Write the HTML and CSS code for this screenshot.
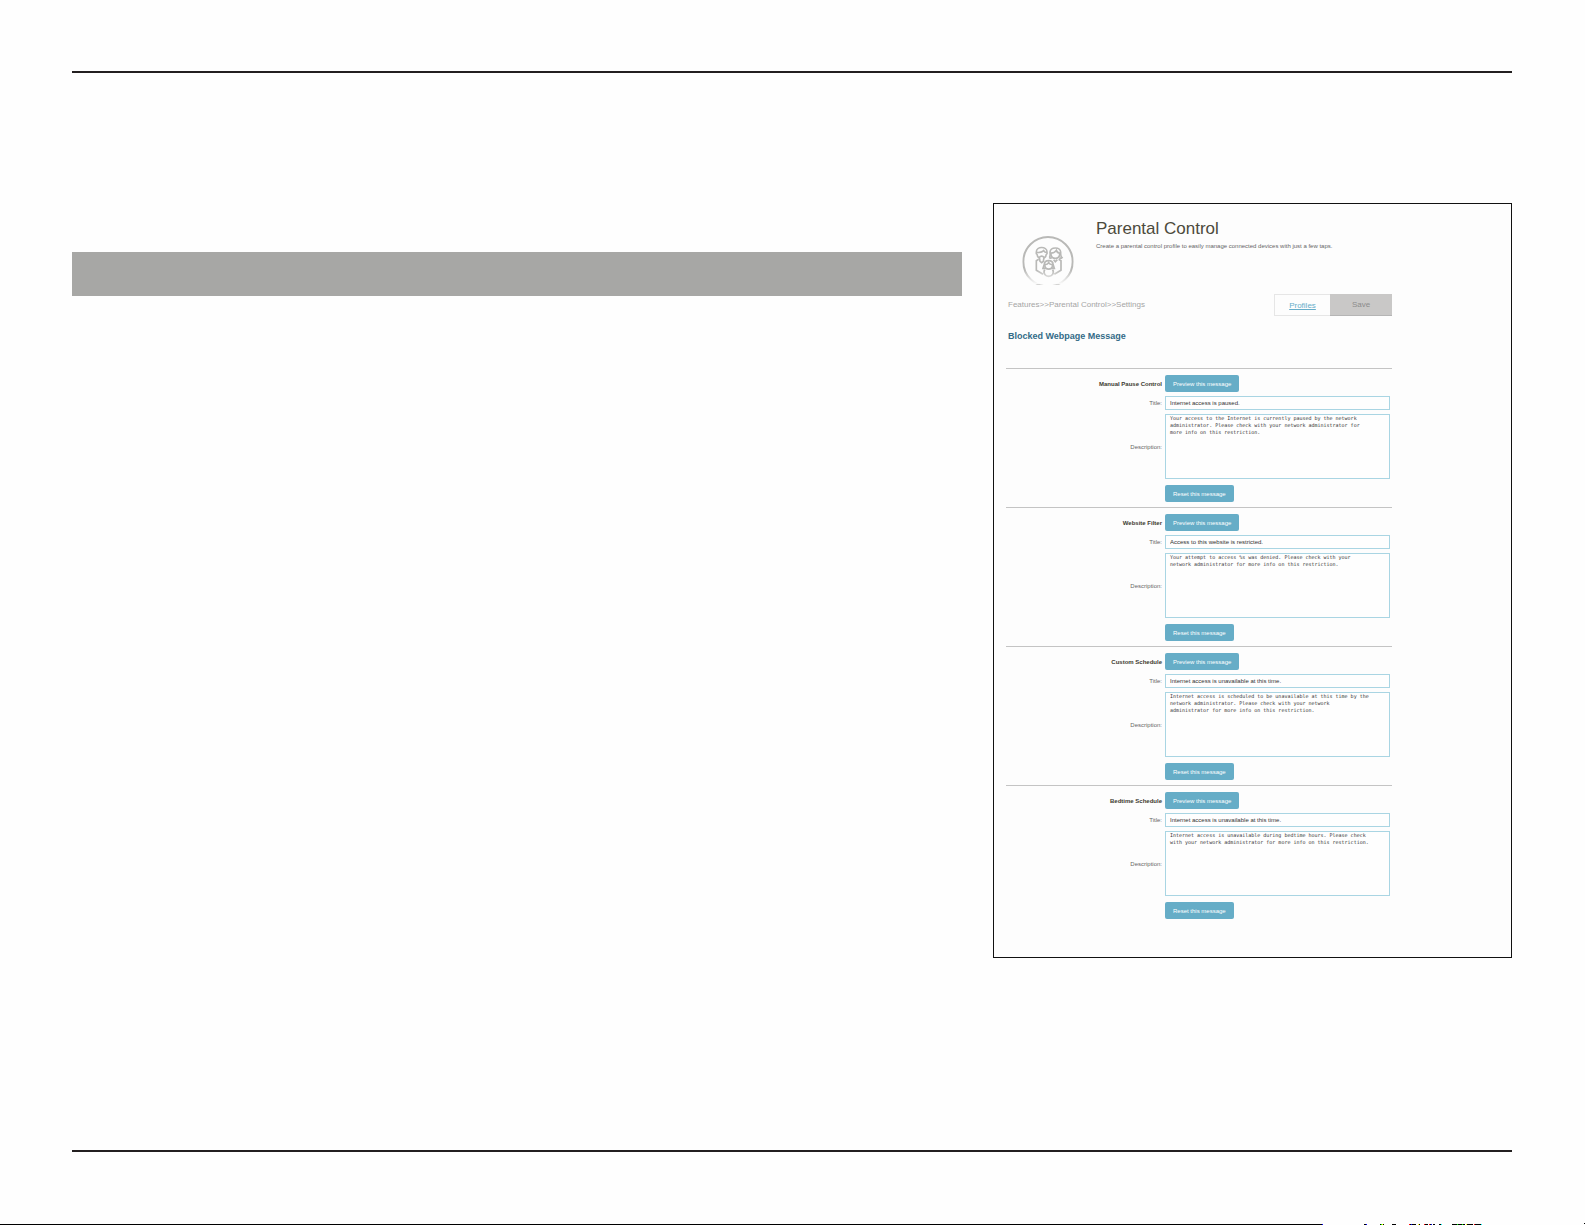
FILE: index.html
```
<!DOCTYPE html>
<html lang="en">

<head>
    <meta charset="UTF-8">
    <meta name="viewport" content="width=device-width, initial-scale=1.0">
    <title>Parental Control</title>
    <link rel="stylesheet" href="styles.css">
</head>

<body>
    <main class="sheet">
        <div class="bar"></div>
        <section class="panel">
            <header class="intro">
                <svg class="logo" viewBox="110 120 156 150" fill="none" stroke="#b9b9b7" stroke-width="5">
                    <defs>
                        <linearGradient id="fade" gradientUnits="userSpaceOnUse" x1="0" y1="225" x2="0" y2="269">
                            <stop offset="0" stop-color="#fff" />
                            <stop offset="1" stop-color="#000" />
                        </linearGradient>
                        <mask id="bottom" maskUnits="userSpaceOnUse" x="110" y="120" width="156" height="150">
                            <rect x="110" y="120" width="156" height="150" fill="url(#fade)" />
                        </mask>
                    </defs>
                    <g mask="url(#bottom)">
                        <circle cx="188" cy="200" r="74" stroke-width="6" />
                        <!-- father -->
                        <path d="M153 178v-7c0-18 32-18 32 0v7" />
                        <path d="M153 173c10 0 18-2 22-6 2 4 5 6 10 6" />
                        <path d="M155 177c0 8 5 12 8 14M183 177c0 8-5 12-8 14M162 187c4-5 10-5 14 0l-2 12-5 4-5-4z" />
                        <!-- mother -->
                        <path d="M192 188c4-5 2-12 2-17 2-16 30-16 32 0 0 6-1 13 4 17-3 3-6 2-8 0M192 188c3 3 5 2 8 0" />
                        <path d="M197 174c7 0 13-3 16-8 2 5 5 8 10 8v5c-2 15-24 15-26 0z" />
                        <path d="M205 194l5 6 6-6" />
                        <!-- child -->
                        <path d="M177 208c0-15 26-15 26 0l4 12h-8M177 208l-4 12h8" />
                        <path d="M179 209c5 0 9-2 11-6 2 4 6 6 11 6v6c-2 10-20 10-22 0z" />
                        <path d="M178 224c-6 12 3 20 12 20s18-8 12-20" />
                        <!-- arms -->
                        <path d="M160 193l-7 4v29l20 12M220 193l7 4v29l-20 12" />
                    </g>
                </svg>
                <div class="about">
                    <h1>Parental Control</h1>
                    <p>Create a parental control profile to easily manage connected devices with just a few taps.</p>
                </div>
            </header>

            <div class="toolbar">
                <div class="path">Features&gt;&gt;Parental Control&gt;&gt;Settings</div>
                <a class="profiles" href="#">Profiles</a>
                <button class="save" type="submit" form="messages">Save</button>
            </div>

            <h2>Blocked Webpage Message</h2>

            <form id="messages" autocomplete="off">
                <div class="message">
                    <h3>Manual Pause Control</h3>
                    <button type="button" class="btn">Preview this message</button>
                    <label for="title1">Title:</label>
                    <input type="text" id="title1" value="Internet access is paused.">
                    <label for="desc1">Description:</label>
                    <textarea id="desc1">Your access to the Internet is currently paused by the network
administrator. Please check with your network administrator for
more info on this restriction.</textarea>
                    <button type="button" class="btn reset">Reset this message</button>
                </div>
                <div class="message">
                    <h3>Website Filter</h3>
                    <button type="button" class="btn">Preview this message</button>
                    <label for="title2">Title:</label>
                    <input type="text" id="title2" value="Access to this website is restricted.">
                    <label for="desc2">Description:</label>
                    <textarea id="desc2">Your attempt to access %s was denied. Please check with your
network administrator for more info on this restriction.</textarea>
                    <button type="button" class="btn reset">Reset this message</button>
                </div>
                <div class="message">
                    <h3>Custom Schedule</h3>
                    <button type="button" class="btn">Preview this message</button>
                    <label for="title3">Title:</label>
                    <input type="text" id="title3" value="Internet access is unavailable at this time.">
                    <label for="desc3">Description:</label>
                    <textarea id="desc3">Internet access is scheduled to be unavailable at this time by the
network administrator. Please check with your network
administrator for more info on this restriction.</textarea>
                    <button type="button" class="btn reset">Reset this message</button>
                </div>
                <div class="message">
                    <h3>Bedtime Schedule</h3>
                    <button type="button" class="btn">Preview this message</button>
                    <label for="title4">Title:</label>
                    <input type="text" id="title4" value="Internet access is unavailable at this time.">
                    <label for="desc4">Description:</label>
                    <textarea id="desc4">Internet access is unavailable during bedtime hours. Please check
with your network administrator for more info on this restriction.</textarea>
                    <button type="button" class="btn reset">Reset this message</button>
                </div>
            </form>
        </section>
    </main>

    <svg class="edge" viewBox="0 0 1585 2" preserveAspectRatio="none" shape-rendering="crispEdges">
        <path d="M0 1h1322v1H0zM1364 1h2v1h-2zM1380 1h1v1h-1zM1383 1h1v1h-1zM1392 1h4v1h-4zM1410 1h1v1h-1zM1412 1h4v1h-4zM1419 1h1v1h-1zM1425 1h3v1h-3zM1430 1h1v1h-1zM1433 1h2v1h-2zM1439 1h2v1h-2zM1452 1h5v1h-5zM1458 1h4v1h-4zM1463 1h2v1h-2zM1467 1h6v1h-6zM1475 1h6v1h-6zM1584 0h1v1h-1z" />
        <path fill="#00f" d="M1322 1h1v1h-1zM1366 1h1v1h-1zM1411 1h1v1h-1zM1431 1h1v1h-1z" />
        <path fill="#0f0" d="M1381 1h1v1h-1zM1457 1h1v1h-1zM1462 1h1v1h-1z" />
        <path fill="#ff0" d="M1382 1h1v1h-1zM1418 1h1v1h-1zM1466 1h1v1h-1z" />
        <path fill="#f00" d="M1409 1h1v1h-1zM1424 1h1v1h-1zM1429 1h1v1h-1zM1474 1h1v1h-1z" />
        <path fill="#0ff" d="M1441 1h1v1h-1zM1481 1h1v1h-1z" />
    </svg>
</body>

</html>
```
FILE: styles.css
```
* {
    margin: 0;
    padding: 0;
    box-sizing: border-box;
}

body {
    display: flex;
    flex-direction: column;
    min-height: 100vh;
    padding-top: 71px;
    background: #fefefe;
    color: #666;
    font-family: "Liberation Sans", Arial, sans-serif;
    font-size: 6px;
}

.sheet {
    flex: 1;
    display: grid;
    grid-template-columns: 890fr 519fr;
    column-gap: 31px;
    align-items: start;
    margin: 0 73px 71px 72px;
    padding: 130px 0;
    border-top: 2px solid #231f20;
    border-bottom: 2px solid #231f20;
}

.bar {
    height: 44px;
    margin-top: 49px;
    background: #a7a7a5;
}

.panel {
    padding: 15px 119px 33px 12px;
    border: 1px solid #111;
    background: #fdfdfd;
}

.intro {
    display: flex;
    height: 75px;
}

.logo {
    flex: none;
    width: 52px;
    height: 50px;
    margin: 16px 22px 0 16px;
}

h1 {
    color: #4c4a3c;
    font-size: 17px;
    font-weight: 400;
    line-height: 20px;
}

.about p {
    margin-top: 3px;
    font-size: 6px;
    line-height: 8px;
    white-space: nowrap;
}

.toolbar {
    display: flex;
    height: 22px;
    font-size: 8px;
    line-height: 22px;
}

.path {
    flex: 1;
    padding-left: 2px;
    color: #a5a5a5;
}

.profiles {
    width: 56px;
    border: 1px solid #e6e6e6;
    border-right: 0;
    color: #66adc9;
    line-height: 22px;
    text-align: center;
}

.save {
    width: 62px;
    border: 0;
    border-bottom: 1px solid #b5b5b5;
    background: #c9c8c7;
    color: #8c8c8c;
    font: inherit;
    line-height: 22px;
}

h2 {
    padding: 14px 2px 26px;
    color: #336b87;
    font-size: 9px;
    line-height: 12px;
}

.message {
    display: grid;
    grid-template-columns: 159px 1fr;
    grid-template-rows: 17px 14px 65px 19px;
    row-gap: 4px;
    align-items: center;
    padding: 6px 2px 5px 0;
    border-top: 1px solid #c4c4c4;
}

.message h3,
.message label {
    padding-right: 3px;
    font-size: 6px;
    text-align: right;
}

.message h3 {
    color: #3c3a30;
}

.message input,
.message textarea {
    width: 100%;
    height: 100%;
    padding: 0 4px;
    border: 1px solid #a9d5e3;
    outline: none;
    background: #fefefe;
    color: #333;
}

.message input {
    font-family: inherit;
    font-size: 6px;
}

.message textarea {
    font-family: "DejaVu Sans Mono", monospace;
    font-size: 5px;
    line-height: 7px;
    white-space: pre;
    overflow: hidden;
    resize: none;
}

.btn {
    justify-self: start;
    height: 17px;
    padding: 0 8px;
    border: 0;
    border-radius: 2px;
    background: #66adc7;
    color: #fff;
    font-family: inherit;
    font-size: 6px;
    cursor: pointer;
}

.reset {
    grid-column: 2;
    align-self: end;
}

.edge {
    display: block;
    width: 100%;
    height: 2px;
}
```
